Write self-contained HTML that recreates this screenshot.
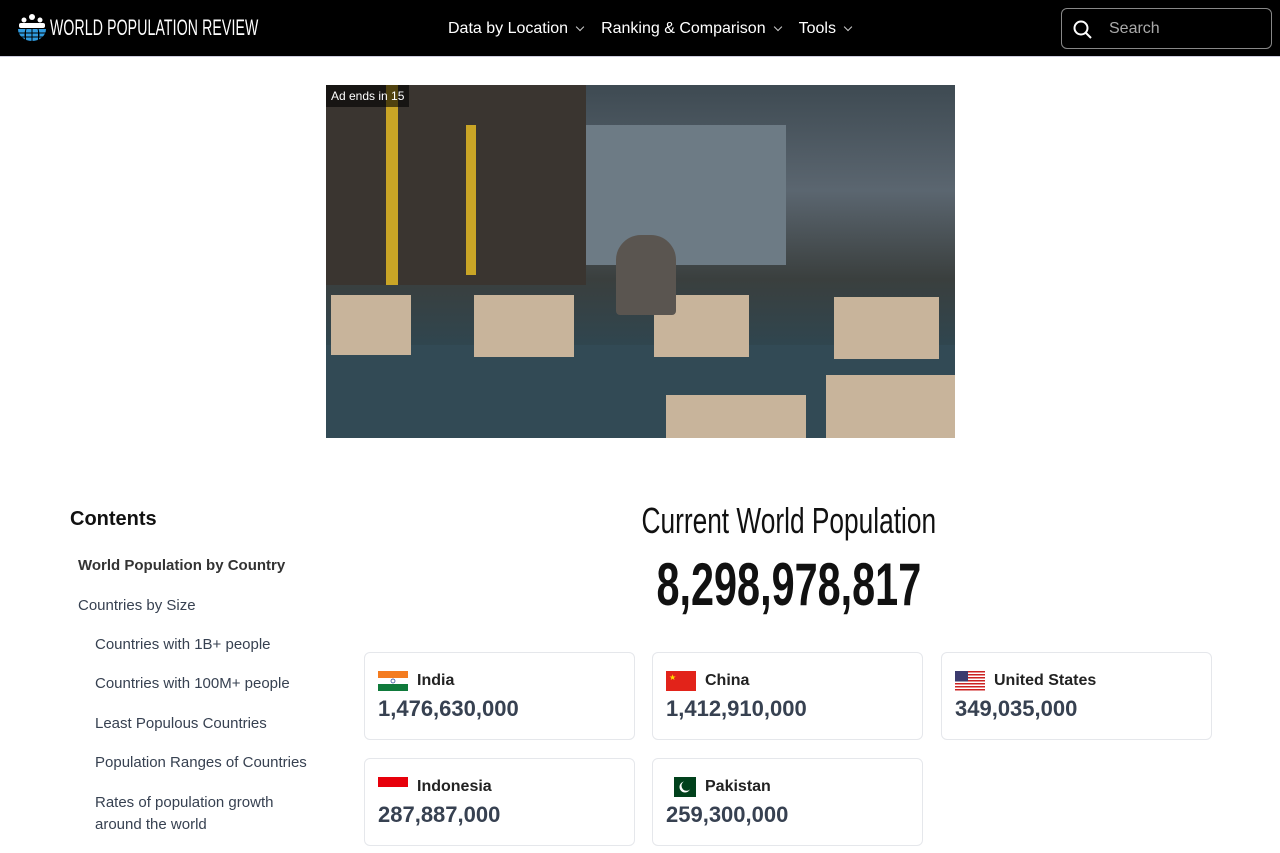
<!DOCTYPE html>
<html><head><meta charset="utf-8"><style>
*{box-sizing:border-box;margin:0;padding:0}
body{width:1280px;height:853px;overflow:hidden;background:#fff;font-family:"Liberation Sans",sans-serif;color:#1f2937}
.nav{height:57px;background:#000;position:relative;border-bottom:1px solid #ccd}
.logo{position:absolute;left:17px;top:14px;display:flex;align-items:center}
.logo .t{color:#fff;font-size:22px;display:inline-block;transform:scaleX(.64);transform-origin:left;white-space:nowrap;margin-left:3px;letter-spacing:.2px}
.menu{position:absolute;left:448px;top:20px;color:#fff;font-size:16px;display:flex;gap:18px}
.menu span:after{content:"";display:inline-block;width:5px;height:5px;border-right:1.3px solid #ccc;border-bottom:1.3px solid #ccc;transform:rotate(45deg);margin-left:9px;position:relative;top:-3px}
.search{position:absolute;left:1061px;top:8px;width:211px;height:41px;border:1px solid #888;border-radius:6px;color:#aaa;font-size:16px;padding:11px 0 0 47px}
.ad{position:absolute;left:326px;top:85px;width:629px;height:353px;background:linear-gradient(180deg,#3e4a52 0%,#5b6670 30%,#3a3f3e 55%,#2f4650 75%,#4c6572 100%);overflow:hidden}
.ad .lbl{position:absolute;left:0;top:0;background:rgba(0,0,0,.6);color:#fff;font-size:12px;padding:4px 5px}
.box{position:absolute;background:#c8b49b}
h2{position:absolute;left:70px;top:508px;font-size:20px;font-weight:bold;color:#111}
.toc{position:absolute;left:78px;top:557px;font-size:15px;color:#374151}
.toc div{position:absolute;white-space:nowrap}
.big{position:absolute;left:364px;width:849px;text-align:center;color:#111}
.card{position:absolute;width:271px;height:88px;border:1px solid #e5e7eb;border-radius:6px}
.card .f{position:absolute;left:13px;top:18px;width:30px;height:20px}
.card .n{position:absolute;left:52px;top:19px;font-size:16px;font-weight:bold;color:#222}
.card .v{position:absolute;left:13px;top:43px;font-size:22px;font-weight:bold;color:#374151}
</style></head><body>
<div class="nav">
 <div class="logo"><svg width="30" height="28" viewBox="0 0 30 28"><circle cx="15" cy="3" r="3" fill="#fff"/><circle cx="7" cy="6" r="2.5" fill="#fff"/><circle cx="23" cy="6" r="2.5" fill="#fff"/><rect x="2" y="9" width="26" height="5" rx="2" fill="#fff"/><path d="M1 15h28a14 12 0 0 1-28 0z" fill="#2f9be0"/><path d="M1 19h28M3 23h24M15 15v13M9 15q-2 6 0 12M21 15q2 6 0 12" stroke="#000" stroke-width="1"/></svg><span class="t">WORLD POPULATION REVIEW</span></div>
 <div class="menu"><span>Data by Location</span><span>Ranking &amp; Comparison</span><span>Tools</span></div>
 <div class="search"><svg style="position:absolute;left:11px;top:11px" width="20" height="20" viewBox="0 0 20 20"><circle cx="8" cy="8" r="6.5" stroke="#fff" stroke-width="2" fill="none"/><path d="M13 13l5 5" stroke="#fff" stroke-width="2"/></svg>Search</div>
</div>
<div class="ad">
 <div style="position:absolute;left:0;top:0;width:260px;height:200px;background:#3a3530"></div>
 <div style="position:absolute;left:260px;top:40px;width:200px;height:140px;background:#6d7b85"></div>
 <div style="position:absolute;left:60px;top:0;width:12px;height:200px;background:#c9a526"></div>
 <div style="position:absolute;left:140px;top:40px;width:10px;height:150px;background:#c9a526"></div>
 <div style="position:absolute;left:0;top:260px;width:629px;height:93px;background:#324a55"></div>
 <div class="box" style="left:5px;top:210px;width:80px;height:60px"></div>
 <div class="box" style="left:148px;top:210px;width:100px;height:62px"></div>
 <div class="box" style="left:328px;top:210px;width:95px;height:62px"></div>
 <div class="box" style="left:508px;top:212px;width:105px;height:62px"></div>
 <div class="box" style="left:340px;top:310px;width:140px;height:43px"></div>
 <div class="box" style="left:500px;top:290px;width:129px;height:63px"></div>
 <div style="position:absolute;left:290px;top:150px;width:60px;height:80px;background:#5a5550;border-radius:25px 25px 4px 4px"></div>
 <div class="lbl">Ad ends in 15</div>
</div>
<h2>Contents</h2>
<div class="toc">
 <div style="top:0;font-weight:bold;color:#333">World Population by Country</div>
 <div style="top:40px">Countries by Size</div>
 <div style="top:79px;left:17px">Countries with 1B+ people</div>
 <div style="top:118px;left:17px">Countries with 100M+ people</div>
 <div style="top:158px;left:17px">Least Populous Countries</div>
 <div style="top:197px;left:17px">Population Ranges of Countries</div>
 <div style="top:237px;left:17px">Rates of population growth</div>
 <div style="top:259px;left:17px">around the world</div>
</div>
<div class="big" style="top:500px;font-size:36px"><span style="display:inline-block;transform:scaleX(.73)">Current World Population</span></div>
<div class="big" style="top:550px;font-size:60px;font-weight:bold"><span style="display:inline-block;transform:scaleX(.69)">8,298,978,817</span></div>
<div class="card" style="left:364px;top:652px"><svg class="f" viewBox="0 0 30 20"><rect width="30" height="7" fill="#f47c20"/><rect y="7" width="30" height="6" fill="#fff"/><rect y="13" width="30" height="7" fill="#0f7a3b"/><circle cx="15" cy="10" r="2" fill="none" stroke="#1a3a8a" stroke-width=".7"/></svg><div class="n">India</div><div class="v">1,476,630,000</div></div>
<div class="card" style="left:652px;top:652px"><svg class="f" viewBox="0 0 30 20"><rect width="30" height="20" fill="#e2231a"/><text x="3" y="9" font-size="8" fill="#ffde00">★</text></svg><div class="n">China</div><div class="v">1,412,910,000</div></div>
<div class="card" style="left:941px;top:652px"><svg class="f" viewBox="0 0 30 20"><rect width="30" height="20" fill="#fff"/><g fill="#c22"><rect y="0" width="30" height="1.5"/><rect y="3" width="30" height="1.5"/><rect y="6" width="30" height="1.5"/><rect y="9" width="30" height="1.5"/><rect y="12" width="30" height="1.5"/><rect y="15" width="30" height="1.5"/><rect y="18" width="30" height="1.5"/></g><rect width="13" height="10.5" fill="#3c3b6e"/></svg><div class="n">United States</div><div class="v">349,035,000</div></div>
<div class="card" style="left:364px;top:758px"><svg class="f" viewBox="0 0 30 20"><rect width="30" height="10" fill="#e7000b"/><rect y="10" width="30" height="10" fill="#fff"/></svg><div class="n">Indonesia</div><div class="v">287,887,000</div></div>
<div class="card" style="left:652px;top:758px"><svg class="f" viewBox="0 0 30 20"><rect width="30" height="20" fill="#01411c"/><rect width="8" height="20" fill="#fff"/><circle cx="19" cy="10" r="5.5" fill="#fff"/><circle cx="20.5" cy="8.8" r="5" fill="#01411c"/></svg><div class="n">Pakistan</div><div class="v">259,300,000</div></div>
</body></html>
